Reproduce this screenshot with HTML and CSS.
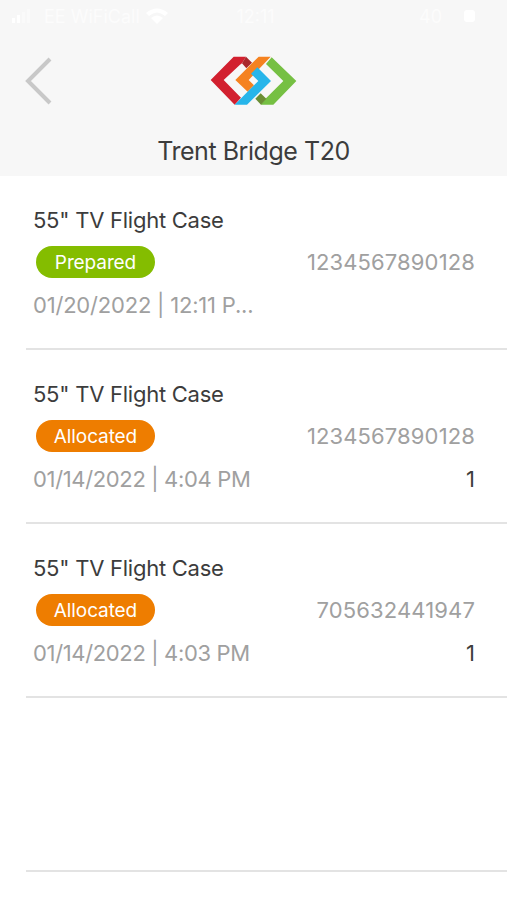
FILE: index.html
```html
<!DOCTYPE html>
<html lang="en">
<head>
<meta charset="utf-8">
<title>Trent Bridge T20</title>
<link rel="stylesheet" href="styles.css">
</head>
<body>
<header class="header">
  <div class="status">
    <div class="carrier">
      <svg width="26" height="14" viewBox="0 0 26 14"><path d="M0 9h3v5H0zM5 6h3v8H5z" fill="#fff"/><path d="M10 3h3v11h-3zM15 0h3v14h-3z" fill="#fafafa"/></svg>
      <span>EE WiFiCall</span>
      <svg width="22" height="16" viewBox="0 0 22 16"><path d="M0 5Q11-4 22 5l-3 3Q11 1 3 8zM5 10q6-5 12 0l-6 6z" fill="#fff"/></svg>
    </div>
    <span class="clock">12:11</span>
    <div class="battery"><span>40</span><i class="charge"></i></div>
  </div>
  <div class="nav">
    <svg class="back" width="28" height="50" viewBox="0 0 28 50"><path d="M25 3 3 25l22 22" fill="none" stroke="#c8c8c8" stroke-width="4"/></svg>
    <svg class="logo" width="88" height="50" viewBox="32 31 264 150">
      <path d="M34 103 103 33h37l-12 20-6 4-49 46 52 53-19 21z" fill="#d2202f"/>
      <path d="M128 53l12-20 18 18-17 17z" fill="#a9282c"/>
      <path d="M108 103 178 33h36l-66 70 16 16-19 19z" fill="#f58220"/>
      <path d="M174 65l41 41-72 71h-37l71-71-22-22z" fill="#27b5ea"/>
      <path d="M200 55l17-20 74 71-69 71h-38l16-19 52-52z" fill="#76c043"/>
      <path d="M168 159l16-16 17 16-16 18z" fill="#6b8e35"/>
    </svg>
  </div>
  <h1 class="title">Trent Bridge T20</h1>
</header>
<main class="list">
  <article class="item">
    <h2 class="name">55" TV Flight Case</h2>
    <div class="row"><span class="badge prepared">Prepared</span><span class="serial">1234567890128</span></div>
    <div class="row"><span class="date first">01/20/2022 | 12:11 P...</span></div>
  </article>
  <article class="item">
    <h2 class="name">55" TV Flight Case</h2>
    <div class="row"><span class="badge allocated">Allocated</span><span class="serial">1234567890128</span></div>
    <div class="row"><span class="date">01/14/2022 | 4:04 PM</span><span class="count">1</span></div>
  </article>
  <article class="item">
    <h2 class="name">55" TV Flight Case</h2>
    <div class="row"><span class="badge allocated">Allocated</span><span class="serial">705632441947</span></div>
    <div class="row"><span class="date">01/14/2022 | 4:03 PM</span><span class="count">1</span></div>
  </article>
  <div class="item"></div>
</main>
</body>
</html>
```
FILE: styles.css
```css
* { box-sizing: border-box; }
body {
  margin: 0;
  height: 900px;
  overflow: hidden;
  background: #fff;
  font-family: Inter, "Liberation Sans", sans-serif;
  color: #3c3c3c;
}
svg { display: block; flex: none; }
.header { height: 176px; background: #f7f7f7; }
.status {
  height: 36px;
  padding: 0 32px 4px 12px;
  display: grid;
  grid-template-columns: 1fr auto 1fr;
  align-items: center;
  color: #fcfcfc;
  font-size: 18px;
}
.carrier { display: flex; align-items: center; gap: 6px; white-space: nowrap; }
.clock { margin-right: -24px; }
.battery { display: flex; align-items: center; justify-content: flex-end; gap: 22px; }
.charge { width: 11px; height: 12px; border-radius: 3px; background: #fff; }
.nav {
  height: 88px;
  padding: 1px 25px 0;
  display: grid;
  grid-template-columns: 1fr 88px 1fr;
  align-items: center;
}
.title {
  margin: 11px 0 0;
  text-align: center;
  font-size: 25px;
  line-height: 32px;
  font-weight: 400;
  letter-spacing: -0.45px;
}
.item {
  height: 174px;
  margin-left: 26px;
  padding: 28px 32px 0 7px;
  border-bottom: 2px solid #e3e3e3;
}
.name { margin: 0 0 10px; font-size: 22px; line-height: 32px; font-weight: 400; letter-spacing: -0.25px; }
.row { display: flex; align-items: center; justify-content: space-between; height: 32px; font-size: 22px; line-height: 32px; white-space: nowrap; }
.row + .row { margin-top: 11px; }
.badge {
  width: 119px;
  height: 32px;
  margin-left: 3px;
  border-radius: 16px;
  text-align: center;
  font-size: 19px;
  line-height: 34px;
  letter-spacing: -0.1px;
  color: #fff;
}
.prepared { background: #84bd00; }
.allocated { background: #ee7d00; }
.serial, .date { color: #a0a0a0; }
.serial { letter-spacing: 0.13px; }
.date { letter-spacing: -0.35px; }
.date.first { letter-spacing: -0.2px; }
.count { color: #3c3c3c; }
```
